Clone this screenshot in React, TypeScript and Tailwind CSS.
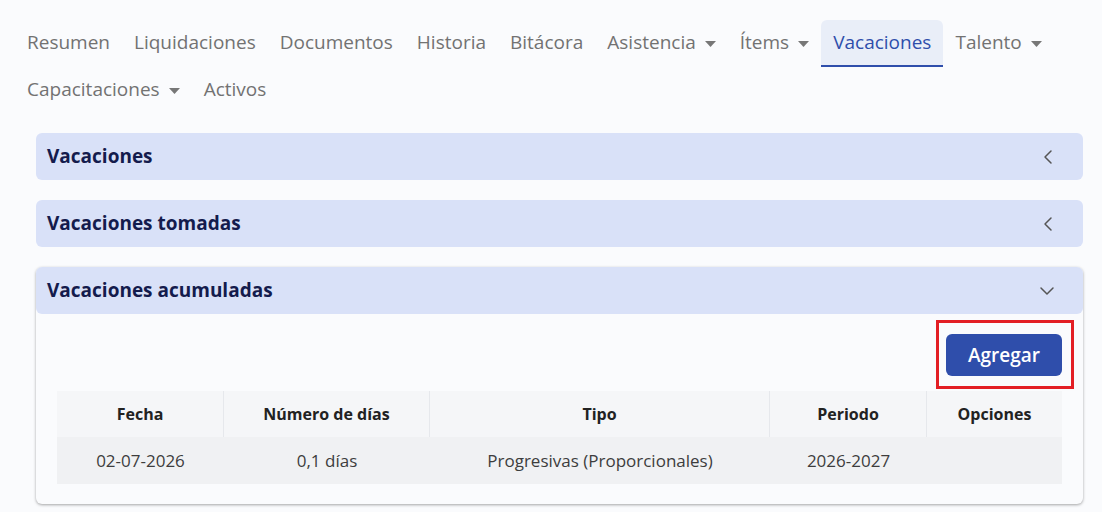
import { ChevronLeft, ChevronDown } from 'lucide-react';
import clsx from 'clsx';

const font = { fontFamily: '"Open Sans", "Noto Sans", sans-serif' };

function Caret() {
  return (
    <svg width="11" height="6" viewBox="0 0 11 6" className="ml-[9px] mt-[2px]">
      <path d="M0 0 L11 0 L5.5 6 Z" fill="#777" />
    </svg>
  );
}

function Tab({ label, dropdown, active }: { label: string; dropdown?: boolean; active?: boolean }) {
  return (
    <div
      className={clsx(
        'flex items-center h-[47px] px-3 rounded-t-md text-[19px] border-b-2',
        active ? 'bg-[#e9eef8] text-[#2f4eab] border-[#2f4eab]' : 'text-[#727272] border-transparent'
      )}
    >
      <span>{label}</span>
      {dropdown && <Caret />}
    </div>
  );
}

function Section({ title, open }: { title: string; open?: boolean }) {
  return (
    <div className="flex items-center justify-between h-[47px] px-[11px] bg-[#d9e1f8] rounded-md">
      <span className="text-[19px] font-bold text-[#141b4d]">{title}</span>
      {open ? (
        <ChevronDown className="w-6 h-6 mr-[13px] text-[#555]" strokeWidth={1.5} />
      ) : (
        <ChevronLeft className="w-6 h-6 mr-[12px] text-[#555]" strokeWidth={1.5} />
      )}
    </div>
  );
}

export default function App() {
  const cols = [
    { label: 'Fecha', w: 'w-[167px]' },
    { label: 'Número de días', w: 'w-[206px]' },
    { label: 'Tipo', w: 'w-[340px]' },
    { label: 'Periodo', w: 'w-[157px]' },
    { label: 'Opciones', w: 'flex-1' },
  ];
  const row = ['02-07-2026', '0,1 días', 'Progresivas (Proporcionales)', '2026-2027', ''];

  return (
    <div className="w-[1102px] h-[512px] bg-[#fafbfd] overflow-hidden" style={font}>
      {/* Tabs */}
      <div className="flex flex-wrap pl-[15px] pr-6 pt-5">
        <Tab label="Resumen" />
        <Tab label="Liquidaciones" />
        <Tab label="Documentos" />
        <Tab label="Historia" />
        <Tab label="Bitácora" />
        <Tab label="Asistencia" dropdown />
        <Tab label="Ítems" dropdown />
        <Tab label="Vacaciones" active />
        <Tab label="Talento" dropdown />
        <Tab label="Capacitaciones" dropdown />
        <Tab label="Activos" />
      </div>

      {/* Sections */}
      <div className="flex flex-col gap-5 pl-[36px] pr-[19px] mt-[19px]">
        <Section title="Vacaciones" />
        <Section title="Vacaciones tomadas" />
        <div className="rounded-md shadow-[0_1px_3px_rgba(0,0,0,0.35)] bg-[#fafbfd]">
          <Section title="Vacaciones acumuladas" open />
          <div className="px-[21px] pt-[6px] pb-[20px]">
            <div className="flex justify-end">
              <div className="border-[3px] border-[#e31e24] pl-[7px] pr-[9px] pt-[11px] pb-[10px] mr-[-12px] mb-[2px]">
                <button className="bg-[#2f4eab] text-white text-[19px] font-semibold w-[116px] h-[42px] rounded-md">
                  Agregar
                </button>
              </div>
            </div>
            <div>
              <div className="flex h-[46px] bg-[#f5f6f8] text-[#222] font-bold text-[16px]">
                {cols.map((c, i) => (
                  <div
                    key={c.label}
                    className={clsx(
                      'flex items-center justify-center',
                      c.w,
                      i < cols.length - 1 && 'border-r border-[#e6e8ec]'
                    )}
                  >
                    {c.label}
                  </div>
                ))}
              </div>
              <div className="flex h-[47px] bg-[#f0f1f3] text-[#3d3d3d] text-[17px]">
                {cols.map((c, i) => (
                  <div key={c.label} className={clsx('flex items-center justify-center', c.w)}>
                    {row[i]}
                  </div>
                ))}
              </div>
            </div>
          </div>
        </div>
      </div>
    </div>
  );
}
